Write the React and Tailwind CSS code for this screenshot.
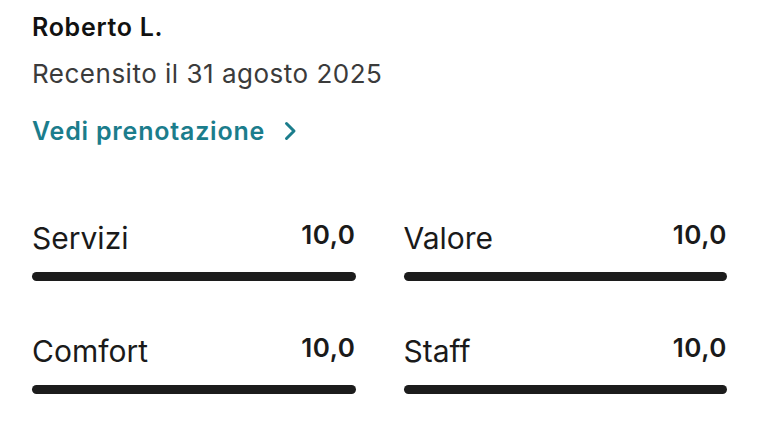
import React from 'react';

const ratings = [
  { label: 'Servizi', value: '10,0' },
  { label: 'Valore', value: '10,0' },
  { label: 'Comfort', value: '10,0' },
  { label: 'Staff', value: '10,0' },
];

const RatingBar = ({ label, value }) => (
  <div>
    <div className="flex items-start justify-between">
      <span className="text-[30px] leading-[36px] text-[#1a1a1a]">{label}</span>
      <span className="text-[26px] leading-[30px] tracking-[0.5px] font-semibold text-[#1a1a1a]">{value}</span>
    </div>
    <div className="mt-[16px] h-[9px] rounded-full bg-[#1c1c1c]" />
  </div>
);

const App = () => {
  return (
    <div className="w-[768px] h-[432px] bg-white pl-[32px] pr-[41px] pt-[10px] font-['Inter',sans-serif]">
      <h2 className="text-[25px] leading-[34px] tracking-[0.7px] font-semibold text-[#111]">Roberto L.</h2>
      <p className="mt-[14px] text-[26px] leading-[32px] tracking-[0.5px] text-[#3b3b3b]">Recensito il 31 agosto 2025</p>
      <a className="mt-[25px] flex items-center gap-[19px] text-[25px] leading-[32px] tracking-[0.8px] font-semibold text-[#1b7d8c]">
        Vedi prenotazione
        <svg width="13" height="20" viewBox="0 0 13 20" fill="none">
          <path d="M2.5 2.5 L10 10 L2.5 17.5" stroke="currentColor" strokeWidth="3" strokeLinecap="round" strokeLinejoin="round" />
        </svg>
      </a>
      <div className="mt-[73px] grid grid-cols-2 gap-x-[48px] gap-y-[52px]">
        {ratings.map(r => (
          <RatingBar key={r.label} label={r.label} value={r.value} />
        ))}
      </div>
    </div>
  );
};

export default App;
